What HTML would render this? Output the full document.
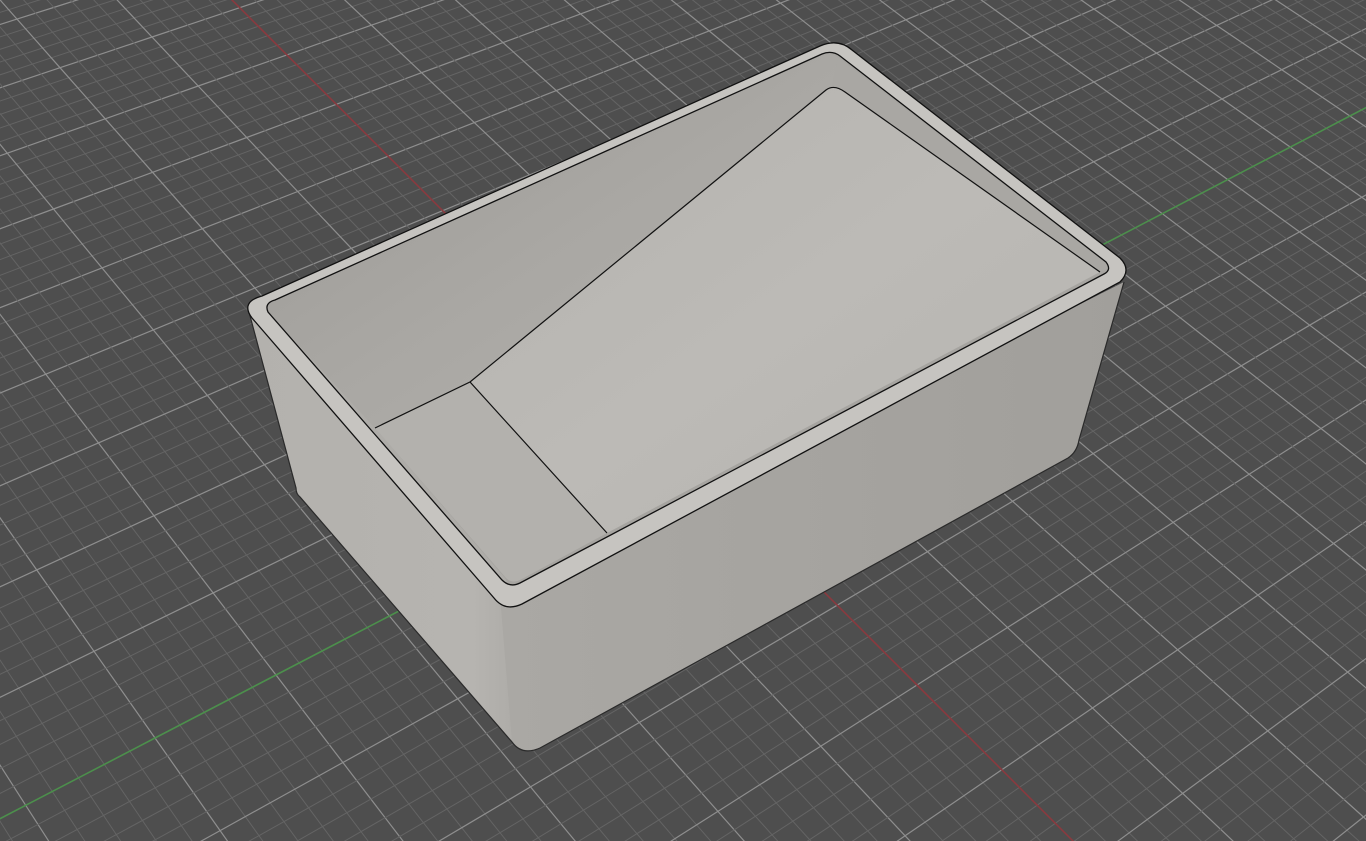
<!DOCTYPE html>
<html><head><meta charset="utf-8"><style>
html,body{margin:0;padding:0;background:#4e4e4e;overflow:hidden;width:1366px;height:841px}
svg{display:block;position:absolute;left:0;top:0}
</style></head><body>
<svg id="s" width="1366" height="841" viewBox="0 0 1366 841" xmlns="http://www.w3.org/2000/svg">
<rect width="1366" height="841" fill="#4e4e4e"/>
<g id="grid"></g>
<defs>
<linearGradient id="front" x1="0" y1="0" x2="1" y2="0">
<stop offset="0" stop-color="#aaa8a4"/><stop offset="1" stop-color="#a19f9b"/></linearGradient>
<linearGradient id="left" x1="0" y1="0" x2="1" y2="0">
<stop offset="0" stop-color="#b3b1ad"/><stop offset="0.85" stop-color="#b6b4b0"/><stop offset="1" stop-color="#aeaca8"/></linearGradient>
<linearGradient id="back" x1="0" y1="0" x2="1" y2="1">
<stop offset="0" stop-color="#9a9894"/><stop offset="0.5" stop-color="#a9a7a3"/><stop offset="1" stop-color="#b4b2ae"/></linearGradient>
<linearGradient id="ramp" x1="0" y1="0" x2="1" y2="1">
<stop offset="0" stop-color="#b4b2ae"/><stop offset="0.5" stop-color="#bcbab6"/><stop offset="1" stop-color="#b6b4b0"/></linearGradient>
</defs>
<!-- front face -->
<path d="M500,596 L1124,282 L1079,440 Q1077,452 1068,458 L540,748 Q522,756 512,742 L490,600 Z" fill="url(#front)"/>
<!-- left face -->
<path d="M249,312 L500,596 L512,742 L300,497 Q296,494 296,488 Z" fill="url(#left)"/>
<!-- silhouette outline -->
<path d="M249,312 L296,488 Q296,494 300,497 L512,742 Q522,756 540,748 L1068,458 Q1077,452 1079,440 L1124,282" fill="none" stroke="#2a2a2a" stroke-width="1.2"/>
<!-- rim top -->
<path d="M262,296 L820,46 Q838,38 852,50 L1120,258 Q1132,270 1120,282 L522,604 Q505,612 494,598 L252,318 Q240,302 262,296 Z" fill="#c6c4c0" stroke="#111" stroke-width="1.3"/>
<!-- interior opening -->
<path d="M275,300 L822,54 Q832,50 840,56 L1106,262 Q1112,270 1104,274 L520,583 Q510,588 502,580 L268,312 Q264,303 275,300 Z" fill="#a6a4a0"/>
<!-- back wall -->
<path d="M275,301 L822,55 Q832,52 838,58 L840,86 L470,382 L375,428 L268,312 Q265,303 275,301 Z" fill="url(#back)"/>
<!-- left inner wall -->
<path d="M268,312 L375,428 L505,578 Q510,586 502,580 Z" fill="#aeaca8"/>
<!-- floor -->
<path d="M375,428 L470,382 L607,533 L520,580 Q512,584 506,578 Z" fill="#b3b1ad"/>
<!-- ramp -->
<path d="M470,382 L826,90 Q834,84 845,92 L1100,272 L607,533 Z" fill="url(#ramp)"/>
<!-- right inner wall -->
<path d="M838,57 L1106,263 Q1110,270 1100,272 L845,92 Q838,86 832,86 Z" fill="#a9a7a3"/>
<path d="M375,428 L470,382 L607,533 M470,382 L826,90 Q834,84 845,92 L1100,272" fill="none" stroke="#111" stroke-width="1.2"/>
<path d="M275,300 L822,54 Q832,50 840,56 L1106,262 Q1112,270 1104,274 L520,583 Q510,588 502,580 L268,312 Q264,303 275,300 Z" fill="none" stroke="#111" stroke-width="1.3"/>
</svg>
<script>
(function(){
function solve(A,b){var n=b.length;for(var i=0;i<n;i++){var m=i;for(var r=i+1;r<n;r++)if(Math.abs(A[r][i])>Math.abs(A[m][i]))m=r;var t=A[i];A[i]=A[m];A[m]=t;t=b[i];b[i]=b[m];b[m]=t;for(var r=i+1;r<n;r++){var f=A[r][i]/A[i][i];for(var c=i;c<n;c++)A[r][c]-=f*A[i][c];b[r]-=f*b[i];}}var x=new Array(n);for(var i=n-1;i>=0;i--){var s=b[i];for(var c=i+1;c<n;c++)s-=A[i][c]*x[c];x[i]=s/A[i][i];}return x;}
var P=[[0,0,691,459],[-5,0,155,738],[0,3,917,685],[-1,-8,152,37]];
var A=[],b=[];
P.forEach(function(p){var u=p[0],v=p[1],x=p[2],y=p[3];
A.push([u,v,1,0,0,0,-u*x,-v*x]);b.push(x);
A.push([0,0,0,u,v,1,-u*y,-v*y]);b.push(y);});
var h=solve(A,b);
function pr(u,v){var w=h[6]*u+h[7]*v+1;return [(h[0]*u+h[1]*v+h[2])/w,(h[3]*u+h[4]*v+h[5])/w,w];}
var g=document.getElementById('grid'),out='';
function line(fn,col,sw){var d='';var prev=null;for(var t=-60;t<=60;t+=0.5){var p=fn(t);if(p[2]<0.02||Math.abs(p[0])>5000||Math.abs(p[1])>5000){prev=null;continue;}if(prev)d+='M'+prev[0].toFixed(1)+','+prev[1].toFixed(1)+'L'+p[0].toFixed(1)+','+p[1].toFixed(1);prev=p;}if(d)out+='<path d="'+d+'" stroke="'+col+'" stroke-width="'+sw+'" fill="none"/>';}
for(var k=-150;k<=150;k++){var q=k/5,maj=(k%5===0);
if(k===0)continue;
var c=maj?'#8e8e8e':'#646464',w=maj?1.2:1;
line(function(t){return pr(q,t);},c,w);
line(function(t){return pr(t,q);},c,w);}
line(function(t){return pr(0,t);},'#8a3a3f',1.6);
line(function(t){return pr(t,0);},'#4c8f4c',1.6);
g.innerHTML=out;
})();
</script>
</body></html>
